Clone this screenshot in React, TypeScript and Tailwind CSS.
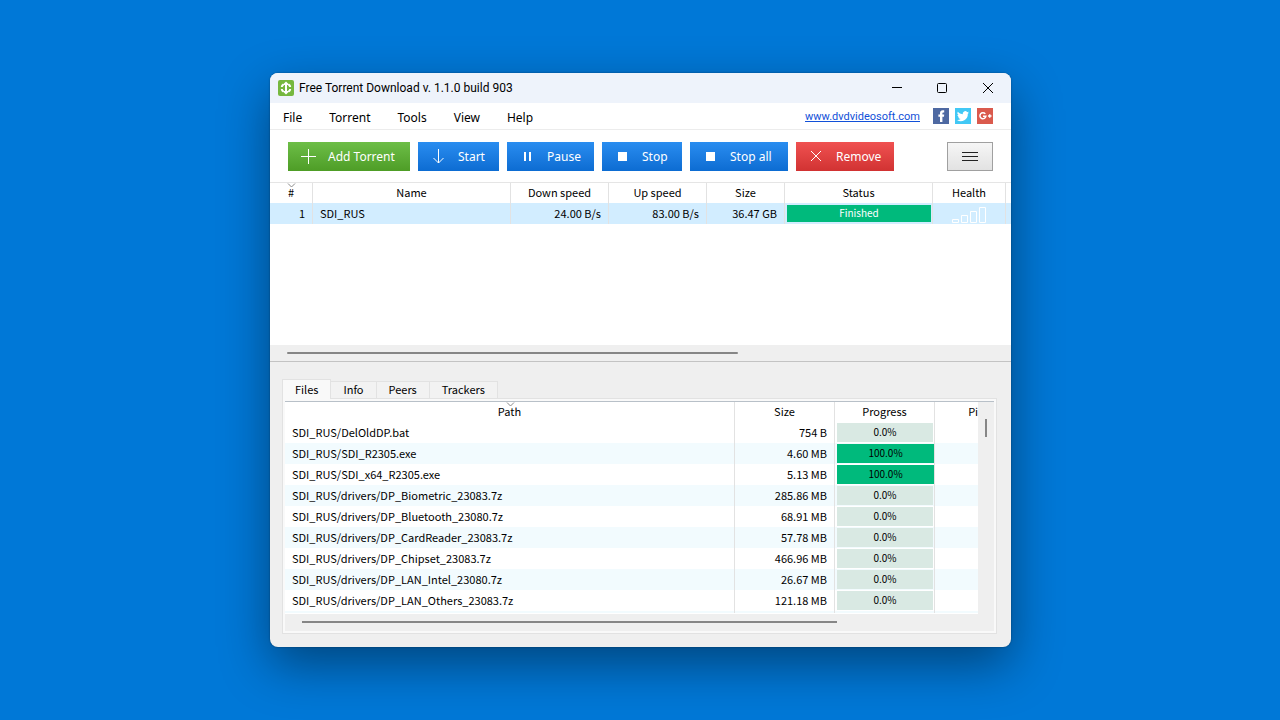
import React, { useState } from 'react';

const menuItems = ['File', 'Torrent', 'Tools', 'View', 'Help'];
const tabs = ['Files', 'Info', 'Peers', 'Trackers'];

const files = [
  { path: 'SDI_RUS/DelOldDP.bat', size: '754 B', progress: 0 },
  { path: 'SDI_RUS/SDI_R2305.exe', size: '4.60 MB', progress: 100 },
  { path: 'SDI_RUS/SDI_x64_R2305.exe', size: '5.13 MB', progress: 100 },
  { path: 'SDI_RUS/drivers/DP_Biometric_23083.7z', size: '285.86 MB', progress: 0 },
  { path: 'SDI_RUS/drivers/DP_Bluetooth_23080.7z', size: '68.91 MB', progress: 0 },
  { path: 'SDI_RUS/drivers/DP_CardReader_23083.7z', size: '57.78 MB', progress: 0 },
  { path: 'SDI_RUS/drivers/DP_Chipset_23083.7z', size: '466.96 MB', progress: 0 },
  { path: 'SDI_RUS/drivers/DP_LAN_Intel_23080.7z', size: '26.67 MB', progress: 0 },
  { path: 'SDI_RUS/drivers/DP_LAN_Others_23083.7z', size: '121.18 MB', progress: 0 },
];

const Logo = () => (
  <svg width="16" height="16" viewBox="0 0 16 16" aria-hidden="true">
    <rect width="16" height="16" rx="2" fill="#76b83f" />
    <path d="M8 1.500 11.500 5H9v6h2.500L8 14.500 4.500 11H7V5H4.500Z" fill="#fff" />
    <path
      d="M5.500 4.500C4.200 5.200 3.800 6 3.800 7M3.800 9c0 1 .4 1.800 1.700 2.500M10.500 4.500c1.300.7 1.700 1.500 1.700 2.500M12.200 9c0 1-.4 1.800-1.700 2.500"
      fill="none"
      stroke="#fff"
      strokeWidth="2"
    />
  </svg>
);

const SortArrow = () => (
  <svg
    className="absolute top-0 left-1/2 -ml-1"
    width="9"
    height="5"
    viewBox="0 0 9 5"
    fill="none"
    stroke="#8a8a8a"
    aria-hidden="true"
  >
    <path d="M1 .5 4.5 4 8 .5" />
  </svg>
);

interface ToolButtonProps {
  label: string;
  className: string;
  children: React.ReactNode;
}

const ToolButton: React.FC<ToolButtonProps> = ({ label, className, children }) => (
  <button
    className={`flex h-[29px] items-center bg-linear-to-b pr-3 text-[12px] whitespace-nowrap text-white ${className}`}
  >
    <span className="flex w-10 shrink-0 justify-center">{children}</span>
    <span className="pt-px">{label}</span>
  </button>
);

const blue = 'from-[#298df0] to-[#0c6cd2]';

const StopIcon = () => <span className="size-[9px] bg-white" />;

const App: React.FC = () => {
  const [activeTab, setActiveTab] = useState('Files');

  return (
    <div className="flex min-h-screen items-center justify-center bg-[#0078d7] pl-px font-['Noto_Sans_CJK_JP',sans-serif] text-[11px] text-black">
      <main className="w-full max-w-[741px] overflow-hidden rounded-lg bg-[#efefef] shadow-[0_18px_50px_rgba(0,0,0,0.42),0_0_2px_rgba(0,0,0,0.4)]">
        <header className="flex h-[30px] items-center bg-[#eef3fb] pl-2 font-[Roboto,sans-serif]">
          <Logo />
          <h1 className="ml-[5px] flex-1 text-[12px]">Free Torrent Download v. 1.1.0 build 903</h1>
          <button aria-label="Minimize" className="flex h-full w-11 items-center justify-center">
            <svg width="10" height="10" stroke="#000"><path d="M0 4.500h10" /></svg>
          </button>
          <button aria-label="Maximize" className="flex h-full w-[46px] items-center justify-center pb-px">
            <svg width="10" height="10" fill="none" stroke="#000"><rect x=".5" y=".5" width="9" height="9" rx="1" /></svg>
          </button>
          <button aria-label="Close" className="flex h-full w-[46px] items-center justify-center pb-px">
            <svg width="10" height="10" stroke="#000"><path d="m0 0 10 10M10 0 0 10" /></svg>
          </button>
        </header>

        <div className="flex h-[27px] items-center border-b border-[#ececec] bg-white pr-[18px] pl-[13px] font-['Noto_Sans',sans-serif]">
          <nav className="flex flex-1 gap-[27px] pt-1 text-[12px]">
            {menuItems.map((item) => (
              <button key={item}>{item}</button>
            ))}
          </nav>
          <a
            href="http://www.dvdvideosoft.com"
            className="mr-[13px] pt-0.5 font-[Roboto,sans-serif] text-[11px] text-[#1150d8] underline"
          >
            www.dvdvideosoft.com
          </a>
          <div className="flex gap-[6px]">
            <a href="#facebook" aria-label="Facebook">
              <svg width="16" height="16" viewBox="0 0 16 16">
                <rect width="16" height="16" fill="#4e69a2" />
                <path d="M7 14V8.800H5.400V6.500H7V5.100C7 3.200 8 2.200 9.700 2.200h1.500v2.200h-1c-.6 0-.8.3-.8.9v1.200h1.800L11 8.800H9.400V14Z" fill="#fff" />
              </svg>
            </a>
            <a href="#twitter" aria-label="Twitter">
              <svg width="16" height="16" viewBox="0 0 16 16">
                <rect width="16" height="16" fill="#41c8f5" />
                <path d="M14 4.400c-.4.2-.9.4-1.400.4.5-.3.9-.8 1.100-1.400-.5.3-1 .5-1.600.6a2.500 2.500 0 0 0-4.300 2.300A7 7 0 0 1 2.700 3.700a2.500 2.500 0 0 0 .8 3.300c-.4 0-.8-.1-1.100-.3 0 1.200.8 2.200 2 2.500-.4.100-.7.100-1.100 0 .3 1 1.200 1.700 2.300 1.700A5 5 0 0 1 2 12a7 7 0 0 0 10.800-6.300c.5-.3.9-.8 1.200-1.300Z" fill="#fff" />
              </svg>
            </a>
            <a href="#google-plus" aria-label="Google Plus">
              <svg width="16" height="16" viewBox="0 0 16 16">
                <rect width="16" height="16" fill="#da5a4d" />
                <path d="M8.300 5.900A3 3 0 1 0 8.900 8.200H6M11 8h3.500M12.700 6.300v3.500" fill="none" stroke="#fff" strokeWidth="1.500" />
              </svg>
            </a>
          </div>
        </div>

        <div className="flex h-[52px] items-center gap-2 bg-white px-[18px] font-['Noto_Sans',sans-serif]">
          <ToolButton label="Add Torrent" className="w-[122px] from-[#6dbe47] to-[#4e9d26]">
            <svg width="15" height="15" stroke="#fff"><path d="M0 7.500h15M7.500 0v15" /></svg>
          </ToolButton>
          <ToolButton label="Start" className={`w-[81px] ${blue}`}>
            <svg width="11" height="15" fill="none" stroke="#fff"><path d="M5.500 0v14M.5 9l5 5 5-5" /></svg>
          </ToolButton>
          <ToolButton label="Pause" className={`w-[87px] ${blue}`}>
            <svg width="7" height="9" fill="#fff"><path d="M0 0h2v9H0zM5 0h2v9H5z" /></svg>
          </ToolButton>
          <ToolButton label="Stop" className={`w-20 ${blue}`}>
            <StopIcon />
          </ToolButton>
          <ToolButton label="Stop all" className={`w-[98px] ${blue}`}>
            <StopIcon />
          </ToolButton>
          <ToolButton label="Remove" className="w-[98px] from-[#f05151] to-[#d13232]">
            <svg width="10" height="10" stroke="#fff"><path d="m0 0 10 10M10 0 0 10" /></svg>
          </ToolButton>
          <button
            aria-label="Menu"
            className="ml-auto flex h-[29px] w-[46px] items-center justify-center border border-[#a0a0a0] bg-linear-to-b from-[#f6f6f6] to-[#e2e2e2]"
          >
            <svg width="16" height="9" stroke="#222"><path d="M0 .5h16M0 4.500h16M0 8.500h16" /></svg>
          </button>
        </div>

        <section className="min-h-[163px] border-t border-[#e5e5e5] bg-white">
          <table className="w-full table-fixed border-separate border-spacing-0 leading-4">
            <colgroup>
              <col className="w-[43px]" />
              <col />
              <col className="w-[98px]" />
              <col className="w-[98px]" />
              <col className="w-[78px]" />
              <col className="w-[148px]" />
              <col className="w-[73px]" />
              <col className="w-[5px]" />
            </colgroup>
            <thead>
              <tr className="h-5 *:border-r *:border-[#e2e2e2] *:p-0 *:pb-0.5 *:font-normal *:last:border-0">
                <th className="relative">
                  <SortArrow />#
                </th>
                <th>Name</th>
                <th>Down speed</th>
                <th>Up speed</th>
                <th>Size</th>
                <th>Status</th>
                <th>Health</th>
                <td />
              </tr>
            </thead>
            <tbody>
              <tr className="h-[21px] bg-[#d2edff] text-right *:border-r *:border-[#e2e2e2] *:px-[7px] *:last:border-0 *:last:px-0">
                <td className="pb-0.5">1</td>
                <td className="pb-0.5 text-left">SDI_RUS</td>
                <td className="pb-0.5">24.00 B/s</td>
                <td className="pb-0.5">83.00 B/s</td>
                <td className="pb-0.5">36.47 GB</td>
                <td className="py-0">
                  <div className="-mr-[6px] -ml-[5px] h-[17px] bg-[#00ba7c] text-center text-[10px] text-white">
                    Finished
                  </div>
                </td>
                <td className="py-0">
                  <svg className="mx-auto mt-px" width="35" height="17" fill="none" stroke="#fff" aria-label="Health">
                    <path d="M.5 13.500h6v3h-6zM9.500 9.500h6v7h-6zM18.500 5.500h6v11h-6zM27.500 1.500h6v15h-6z" />
                  </svg>
                </td>
                <td />
              </tr>
            </tbody>
          </table>
        </section>
        <div className="h-[17px] border-b border-[#c3c3c3] pt-[7px] pl-[17px]">
          <div className="h-[2px] w-[451px] rounded-full bg-[#868686]" />
        </div>

        <section className="px-3 pt-[17px] pb-[13px]">
          <div className="flex h-[19px] items-end" role="tablist">
            {tabs.map((tab) => (
              <button
                key={tab}
                role="tab"
                aria-selected={tab === activeTab}
                onClick={() => setActiveTab(tab)}
                className={
                  tab === activeTab
                    ? 'relative -mb-px h-5 border border-b-0 border-[#e2e2e2] bg-[#f9f9f9] px-3 pb-0.5 leading-4'
                    : 'h-[17px] border border-b-0 border-l-0 border-[#e2e2e2] bg-[#f2f2f2] px-3 pb-0.5 leading-[14px]'
                }
              >
                {tab}
              </button>
            ))}
          </div>
          <div className="mr-[2px] border border-[#e2e2e2] bg-[#f9f9f9] p-[2px]">
            <div className="border-t border-[#b8c0c8] bg-[#efefef]">
              <div className="flex">
                <div className="h-[212px] flex-1 overflow-hidden border-b border-white bg-white">
                  <table className="w-[750px] table-fixed border-separate border-spacing-0 leading-4">
                    <colgroup>
                      <col className="w-[450px]" />
                      <col className="w-[100px]" />
                      <col className="w-[100px]" />
                      <col className="w-[100px]" />
                    </colgroup>
                    <thead>
                      <tr className="h-5 *:border-r *:border-[#e2e2e2] *:p-0 *:pb-0.5 *:font-normal">
                        <th className="relative">
                          <SortArrow />Path
                        </th>
                        <th>Size</th>
                        <th>Progress</th>
                        <th>Pieces</th>
                      </tr>
                    </thead>
                    <tbody>
                      {files.map((file) => (
                        <tr
                          key={file.path}
                          className="h-[21px] even:bg-[#f2fbfe] *:border-r *:border-[#e2e2e2]"
                        >
                          <td className="px-[7px] pb-0.5">{file.path}</td>
                          <td className="px-[7px] pb-0.5 text-right">{file.size}</td>
                          <td className="py-0 pr-0 pl-[2px]">
                            <div
                              className={`h-[19px] text-center text-[10px] leading-[18px] ${
                                file.progress === 100 ? 'bg-[#00ba7c]' : 'mr-px bg-[#d9e9e3]'
                              }`}
                            >
                              {file.progress.toFixed(1)}%
                            </div>
                          </td>
                          <td />
                        </tr>
                      ))}
                      <tr className="h-[21px] bg-[#f2fbfe] *:border-r *:border-[#e2e2e2] *:p-0">
                        <td />
                        <td />
                        <td />
                        <td />
                      </tr>
                    </tbody>
                  </table>
                </div>
                <div className="w-4 pt-[17px]">
                  <div className="ml-[7px] h-[18px] w-[2px] bg-[#868686]" />
                </div>
              </div>
              <div className="h-[17px] pt-[7px] pl-[17px]">
                <div className="h-[2px] w-[535px] bg-[#868686]" />
              </div>
            </div>
          </div>
        </section>
      </main>
    </div>
  );
};

export default App;
